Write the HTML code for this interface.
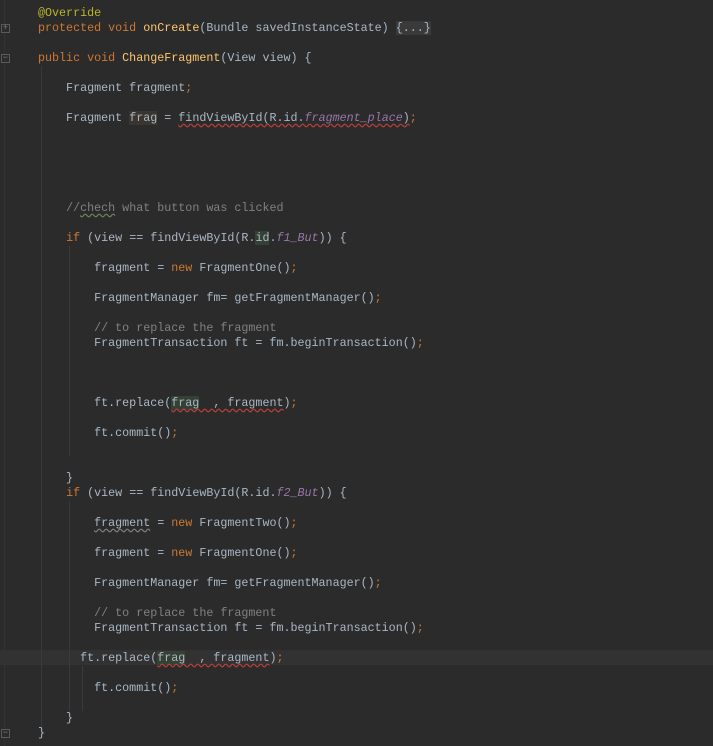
<!DOCTYPE html>
<html><head><meta charset="utf-8"><style>
html,body{margin:0;padding:0;background:#2b2b2b;width:713px;height:746px;overflow:hidden;position:relative}
pre{position:absolute;left:38px;top:6px;margin:0;font-family:"Liberation Mono",monospace;font-size:11.7px;line-height:15px;color:#a9b7c6;white-space:pre}
.k{color:#cc7832}.a{color:#bbb529}.m{color:#ffc66d}.c{color:#808080}.f{color:#9876aa;font-style:italic}
.fold{background:#3a3a3a;color:#a9b7c6}
.err{text-decoration:underline wavy #bc3f3c;text-underline-offset:2px}
.warn{text-decoration:underline wavy #6a8759;text-underline-offset:2px}
.gray{text-decoration:underline wavy #808080;text-underline-offset:2px}
.hl{background:#344134}
.fh{background:#3b3530}
.cur{position:absolute;left:0;top:650px;width:713px;height:15px;background:#323232}
.v{position:absolute;width:1px;background:#3a3a3a}
.fm{position:absolute;left:1px;width:9px;height:9px;border:1px solid #5a5a5a;box-sizing:border-box;color:#777;font:9px/7px "Liberation Mono",monospace;text-align:center}
</style></head><body>
<div class="cur"></div>
<div class="v" style="left:4px;top:0;height:746px;background:#333"></div>
<div class="v" style="left:41px;top:66px;height:668px"></div>
<div class="v" style="left:69px;top:246px;height:210px"></div>
<div class="v" style="left:69px;top:501px;height:210px"></div>
<div class="v" style="left:82px;top:666px;height:45px"></div>
<div class="fm" style="top:24px">+</div>
<div class="fm" style="top:54px">−</div>
<div class="fm" style="top:729px">−</div>
<pre><span class="a">@Override</span>
<span class="k">protected void </span><span class="m">onCreate</span>(Bundle savedInstanceState) <span class="fold">{...}</span>

<span class="k">public void </span><span class="m">ChangeFragment</span>(View view) {

    Fragment fragment<span class="k">;</span>

    Fragment <span class="fh">frag</span> = <span class="err">findViewById(R.id.<span class="f">fragment_place</span>)</span><span class="k">;</span>





    <span class="c">//<span class="warn">chech</span> what button was clicked</span>

    <span class="k">if </span>(view == findViewById(R.<span class="hl">id</span>.<span class="f">f1_But</span>)) {

        fragment = <span class="k">new </span>FragmentOne()<span class="k">;</span>

        FragmentManager fm= getFragmentManager()<span class="k">;</span>

        <span class="c">// to replace the fragment</span>
        FragmentTransaction ft = fm.beginTransaction()<span class="k">;</span>



        ft.replace(<span class="err"><span class="hl">frag</span>  , fragment</span>)<span class="k">;</span>

        ft.commit()<span class="k">;</span>


    }
    <span class="k">if </span>(view == findViewById(R.id.<span class="f">f2_But</span>)) {

        <span class="gray">fragment</span> = <span class="k">new </span>FragmentTwo()<span class="k">;</span>

        fragment = <span class="k">new </span>FragmentOne()<span class="k">;</span>

        FragmentManager fm= getFragmentManager()<span class="k">;</span>

        <span class="c">// to replace the fragment</span>
        FragmentTransaction ft = fm.beginTransaction()<span class="k">;</span>

      ft.replace(<span class="err"><span class="hl">frag</span>  , fragment</span>)<span class="k">;</span>

        ft.commit()<span class="k">;</span>

    }
}</pre>
</body></html>
